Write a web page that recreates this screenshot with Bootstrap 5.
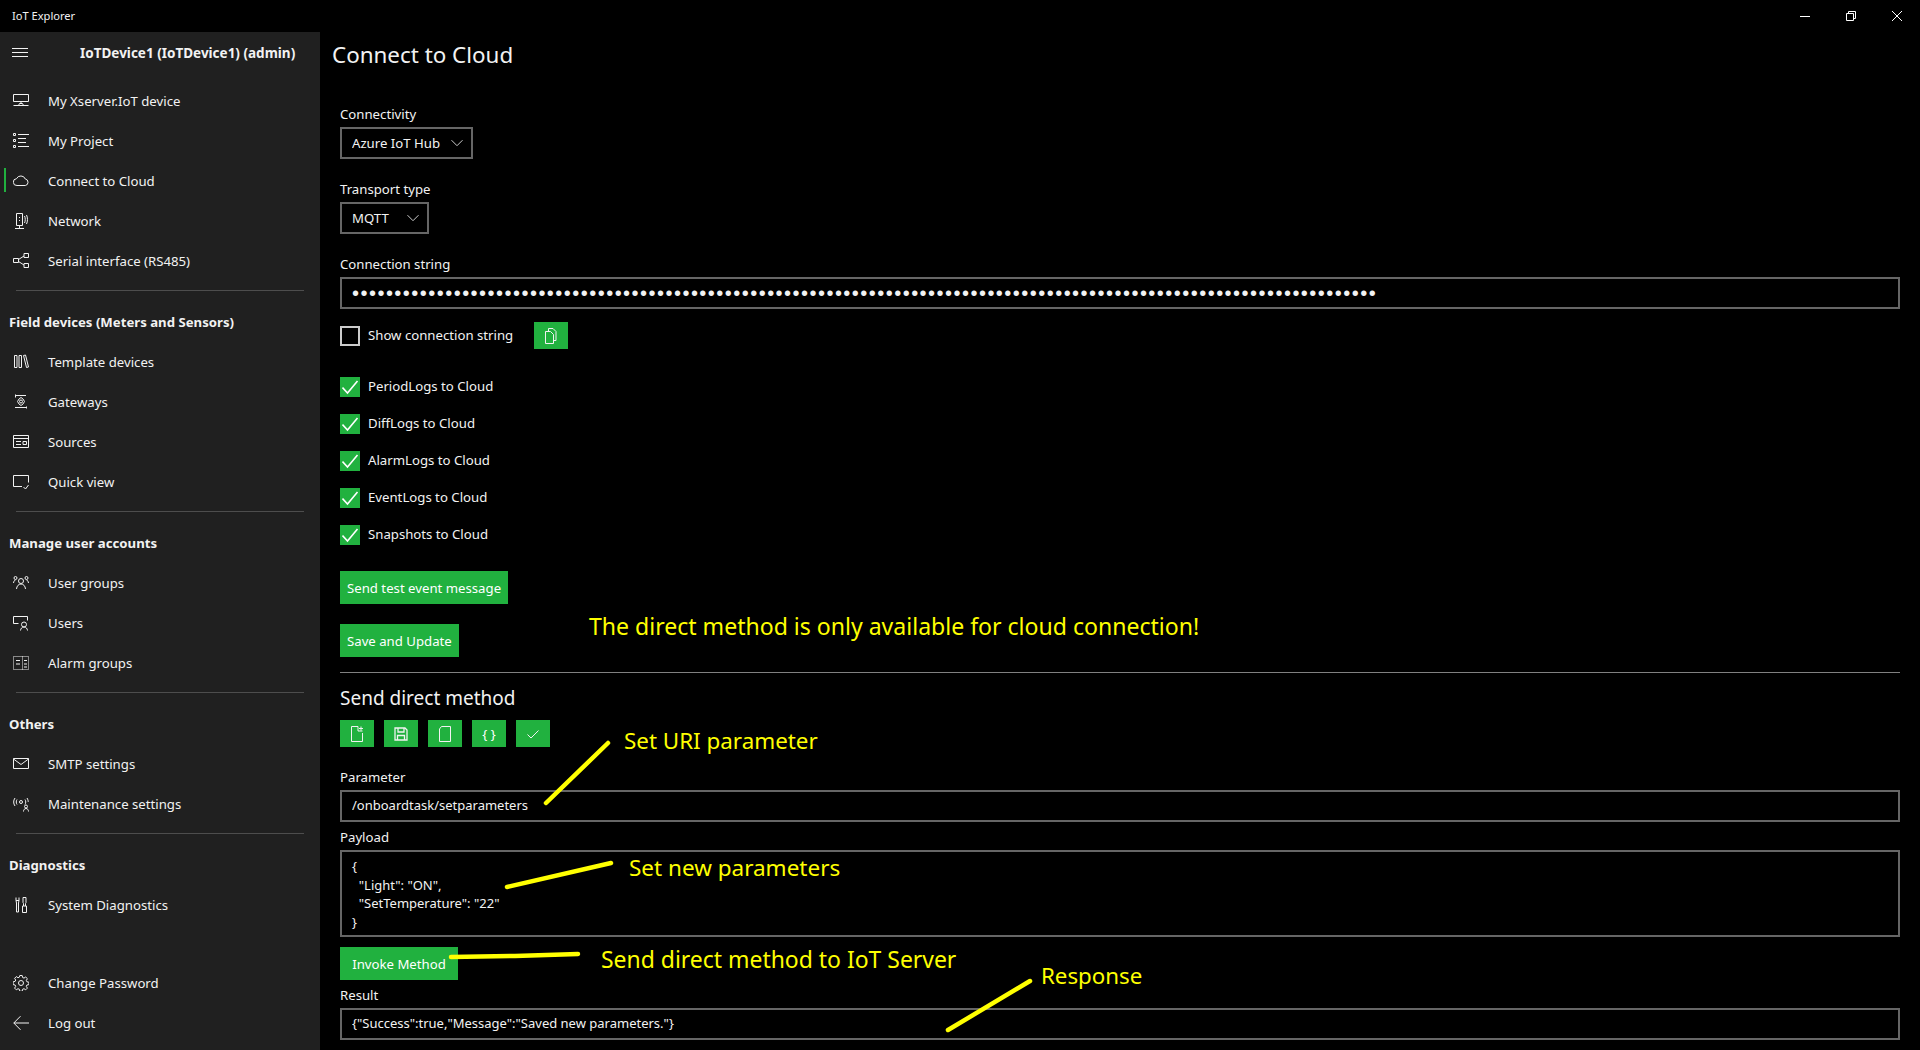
<!DOCTYPE html>
<html lang="en">
<head>
  <meta charset="UTF-8">
  <meta name="viewport" content="width=device-width, initial-scale=1">
  <title>IoT Explorer</title>
  <link href="https://cdn.jsdelivr.net/npm/bootstrap@5.3.2/dist/css/bootstrap.min.css" rel="stylesheet">
  <style>
    html, body { height: 100%; }
    body { background: #000; color: #f2f2f2; font-family: "Noto Sans", "Liberation Sans", sans-serif; font-size: 13.2px; overflow: hidden; position: relative; }
    svg.ico { width: 16px; height: 16px; fill: none; stroke: #f2f2f2; stroke-width: 1; flex: none; }
    .title-bar { height: 32px; font-size: 11.1px; padding-left: 12px; }
    .win-btn { width: 46px; height: 32px; }
    .win-btn svg { width: 12px; height: 12px; fill: none; stroke: #fff; stroke-width: 1; }
    .app-shell { height: 1018px; }
    .side-bar { width: 320px; background: #202020; padding-bottom: 7px; }
    .side-head { height: 42px; margin-bottom: 7px; padding-left: 12px; }
    .side-head b { margin-left: 52px; font-size: 13.5px; font-weight: 700; white-space: nowrap; }
    .side-item { height: 40px; padding-left: 13px; gap: 19px; color: #f2f2f2; position: relative; text-decoration: none; }
    .side-item span { padding-top: 2px; }
    .side-item.active-page::before { content: ""; position: absolute; left: 4px; top: 7px; width: 2px; height: 24px; background: #21b13f; }
    .side-rule { margin: 9px 16px 0; border: 0; border-top: 1px solid #4d4d4d; opacity: 1; }
    .side-title { height: 24px; line-height: 24px; margin: 19px 0 8px 9px; font-size: 13.2px; font-weight: 700; }
    .main-pane { padding: 0 20px; }
    .page-title { margin: 0 0 0 -8px; height: 44px; line-height: 46px; padding: 0; font-size: 22.4px; font-weight: 400; color: #f2f2f2; }
    .fld-label { display: block; height: 20px; line-height: 20px; margin: 0 0 3px; }
    .fld-gap { margin-top: 20px; }
    .fld-gap-sm { margin-top: 5px; }
    .box-field.form-control, .box-field.form-select { height: 32px; min-height: 0; padding: 0 10px 2px; background-color: #000; color: #f2f2f2; border: 2px solid #666; border-radius: 0; font-size: 13px; box-shadow: none; }
    .box-field.form-select { font-size: 13.2px; padding: 2px 24px 0 10px; background-image: url("data:image/svg+xml,%3csvg xmlns='http://www.w3.org/2000/svg' viewBox='0 0 12 12'%3e%3cpath fill='none' stroke='%23ccc' d='M.5 3.200 6 8.700l5.500-5.500'/%3e%3c/svg%3e"); background-position: right 8px center; background-size: 12px 12px; }
    .sel-azure { width: 133px; }
    .sel-mqtt { width: 89px; }
    .area-field.form-control { height: 87px; padding: 5px 10px 0; line-height: 18.5px; resize: none; overflow: hidden; }
    .secret-field.form-control { font-family: "Liberation Sans", sans-serif; letter-spacing: 1.47px; font-size: 20px; padding-bottom: 0; }
    .tick-row { height: 20px; gap: 8px; }
    .tick-row .form-check-input { width: 20px; height: 20px; margin: 0; flex: none; background-color: #000; border: 2px solid #ccc; border-radius: 0; box-shadow: none; }
    .tick-row .form-check-input:checked { background-color: #21b13f; border-color: #21b13f; background-image: url("data:image/svg+xml,%3csvg xmlns='http://www.w3.org/2000/svg' viewBox='0 0 20 20'%3e%3cpath fill='none' stroke='%23fff' stroke-width='1.6' d='M2.500 10.500 7.500 16 17.500 4'/%3e%3c/svg%3e"); background-size: 20px 20px; }
    .tick-row label { line-height: 20px; padding-bottom: 2px; }
    .show-row { margin-top: 13px; height: 27px; }
    .copy-btn { margin-left: 13px; }
    .tick-stack { margin-top: 28px; gap: 17px; }
    .btn.green-btn { background: #21b13f; border: 0; border-radius: 0; color: #fff; font-size: 13.2px; padding: 1px 7px 0; height: 33px; line-height: 32px; white-space: nowrap; }
    .btn.green-btn.invoke-btn { padding: 1px 0 0; margin-top: 10px; width: 118px; text-align: center; }
    .btn.icon-btn { width: 34px; height: 27px; padding: 0; }
    .main-rule { margin: 15px 0 0; border: 0; border-top: 1px solid #808080; opacity: 1; }
    .sub-title { margin: 11px 0 8px; height: 28px; line-height: 28px; font-size: 19px; font-weight: 400; color: #f2f2f2; }
    .note-text { position: absolute; color: #ff0; line-height: 30px; white-space: nowrap; }
    .note-lines { position: absolute; inset: 0; width: 1920px; height: 1050px; pointer-events: none; fill: none; stroke: #ff0; stroke-width: 4.5; stroke-linecap: round; stroke-linejoin: round; }
    .note-1 { left: 589px; top: 611px; font-size: 23.05px; }
    .note-2 { left: 624px; top: 726px; font-size: 22.4px; }
    .note-3 { left: 629px; top: 853px; font-size: 22.5px; }
    .note-4 { left: 601px; top: 944px; font-size: 22.95px; }
    .note-5 { left: 1041px; top: 961px; font-size: 22.3px; }
  </style>
</head>
<body>
  <div class="title-bar d-flex align-items-center justify-content-between">
    <span>IoT Explorer</span>
    <div class="d-flex">
      <div class="win-btn d-flex align-items-center justify-content-center"><svg viewBox="0 0 12 12"><path d="M1 6.500h10"/></svg></div>
      <div class="win-btn d-flex align-items-center justify-content-center"><svg viewBox="0 0 12 12"><path d="M1.500 3.500h7v7h-7zM3.500 3.500v-2h7v7h-2"/></svg></div>
      <div class="win-btn d-flex align-items-center justify-content-center"><svg viewBox="0 0 12 12"><path d="M1 1l10 10M11 1 1 11"/></svg></div>
    </div>
  </div>

  <div class="app-shell d-flex">
    <nav class="side-bar d-flex flex-column flex-shrink-0">
      <div class="side-head d-flex align-items-center">
        <svg class="ico" viewBox="0 0 16 16"><path d="M0 3.500h16M0 7.500h16M0 11.500h16"/></svg>
        <b>IoTDevice1 (IoTDevice1) (admin)</b>
      </div>

      <a class="side-item d-flex align-items-center" href="#">
        <svg class="ico" viewBox="0 0 16 16"><path d="M.5 1.500h15v7H.5zM8 8.500v2M5.500 12.500l1-2h3l1 2M.5 12.500h15"/></svg>
        <span>My Xserver.IoT device</span>
      </a>
      <a class="side-item d-flex align-items-center" href="#">
        <svg class="ico" viewBox="0 0 16 16"><path d="M.5.5h2v2h-2zM.5 6.500h2v2h-2zM.5 12.500h2v2h-2zM5 1.500h11M5 5.500h8M5 9.500h8M5 13.500h11"/></svg>
        <span>My Project</span>
      </a>
      <a class="side-item active-page d-flex align-items-center" href="#">
        <svg class="ico" viewBox="0 0 16 16"><path d="M4 12.500a3.400 3.400 0 0 1-.5-6.800A4.800 4.800 0 0 1 12.300 6a3.300 3.300 0 0 1 0 6.500z"/></svg>
        <span>Connect to Cloud</span>
      </a>
      <a class="side-item d-flex align-items-center" href="#">
        <svg class="ico" viewBox="0 0 16 16"><path d="M3.500.5h6v12h-6zM6.500 12.500v2.500M2 15.500h9M6.500 4v1M6.500 7v1M11.500 3c1 2 1 5 0 7M13.500 2c1.300 2.500 1.300 6.500 0 9"/></svg>
        <span>Network</span>
      </a>
      <a class="side-item d-flex align-items-center" href="#">
        <svg class="ico" viewBox="0 0 16 16"><path d="M.5 5.500h5v4h-5zM11 .5h4.500v4H11zM11 10.500h4.500v4H11zM5.500 6.500 11 3M5.500 8.500 11 12"/></svg>
        <span>Serial interface (RS485)</span>
      </a>

      <hr class="side-rule">
      <div class="side-title">Field devices (Meters and Sensors)</div>

      <a class="side-item d-flex align-items-center" href="#">
        <svg class="ico" viewBox="0 0 16 16"><path d="M1.500 1.500h2.500v12H1.500zM6 1.500h2.500v12H6zM10.500 1.500l2-.5 3 12-2 .5z"/></svg>
        <span>Template devices</span>
      </a>
      <a class="side-item d-flex align-items-center" href="#">
        <svg class="ico" viewBox="0 0 16 16"><path d="M2 1.500h11M2.500.5v3M2 13.500h12M13.500 12.500v2M6 5l2-1.500L10 5l1.500 2.500L10 10l-2 1.500L6 10 4.500 7.500z"/><circle cx="8" cy="7.500" r="1.500"/></svg>
        <span>Gateways</span>
      </a>
      <a class="side-item d-flex align-items-center" href="#">
        <svg class="ico" viewBox="0 0 16 16"><path d="M.5 1.500h15v12H.5zM.5 4.500h15M3 7.500h5M3 10.500h5M10 7.500h3.500v3H10z"/></svg>
        <span>Sources</span>
      </a>
      <a class="side-item d-flex align-items-center" href="#">
        <svg class="ico" viewBox="0 0 16 16"><path d="M9 12.500H.5v-11h15v7M7 12v1M10.500 13l2 2 3-4"/></svg>
        <span>Quick view</span>
      </a>

      <hr class="side-rule">
      <div class="side-title">Manage user accounts</div>

      <a class="side-item d-flex align-items-center" href="#">
        <svg class="ico" viewBox="0 0 16 16"><circle cx="8" cy="6" r="2.500"/><circle cx="2.500" cy="3" r="1.500"/><circle cx="13.500" cy="3" r="1.500"/><path d="M3.500 14c.3-3 2-5 4.500-5s4.200 2 4.500 5M.5 8c.2-1.500 1-3 2-3M15.500 8c-.2-1.500-1-3-2-3"/></svg>
        <span>User groups</span>
      </a>
      <a class="side-item d-flex align-items-center" href="#">
        <svg class="ico" viewBox="0 0 16 16"><path d="M.5 8.500v-7h14v4M.5 8.500h5"/><circle cx="11" cy="9.500" r="2.500"/><path d="M7.500 15.500c.2-2 1.500-3.500 3.500-3.500s3.300 1.500 3.500 3.500"/></svg>
        <span>Users</span>
      </a>
      <a class="side-item d-flex align-items-center" href="#">
        <svg class="ico" viewBox="0 0 16 16"><path stroke-dasharray="1 1" d="M.5 1.500h15v13H.5zM9.500 1.500v13"/><path d="M3 5.500h4M3 9h4M11 5.500h3M11 9h3M11 12h3"/></svg>
        <span>Alarm groups</span>
      </a>

      <hr class="side-rule">
      <div class="side-title">Others</div>

      <a class="side-item d-flex align-items-center" href="#">
        <svg class="ico" viewBox="0 0 16 16"><path d="M.5 2.500h15v10H.5zM.5 3 8 8.500 15.500 3"/></svg>
        <span>SMTP settings</span>
      </a>
      <a class="side-item d-flex align-items-center" href="#">
        <svg class="ico" viewBox="0 0 16 16"><path d="M2 2C.2 4.500.2 7.500 2 10M4 3.500c-1 1.500-1 3.500 0 5M12 3.500c1 1.500 1 3.500 0 5M14 2c1 1.500 1.300 3 1.200 4"/><circle cx="8" cy="6" r="1.500"/><circle cx="13" cy="10.500" r="1.500"/><path d="M10.500 15.500c0-1.700 1-3 2.500-3s2.500 1.300 2.500 3"/></svg>
        <span>Maintenance settings</span>
      </a>

      <hr class="side-rule">
      <div class="side-title">Diagnostics</div>

      <a class="side-item d-flex align-items-center" href="#">
        <svg class="ico" viewBox="0 0 16 16"><path d="M3 .5v3h3v-3M3 3.500 3.500 6v9h2V6L6 3.500M10 .5h3v5l-.5 1v2.500M10 .5v5l.5 1V9M9.500 9h4v6.500h-4z"/></svg>
        <span>System Diagnostics</span>
      </a>

      <a class="side-item d-flex align-items-center mt-auto" href="#">
        <svg class="ico" viewBox="0 0 16 16"><circle cx="8" cy="8" r="2.500"/><path d="M6.800.5h2.400l.4 2 1.400.6 1.700-1.100 1.700 1.700-1.100 1.700.6 1.400 2 .4v2.400l-2 .4-.6 1.400 1.100 1.700-1.700 1.700-1.700-1.100-1.400.6-.4 2H6.800l-.4-2-1.400-.6-1.700 1.100-1.700-1.700 1.100-1.700-.6-1.400-2-.4V6.800l2-.4.6-1.400-1.100-1.700 1.700-1.700 1.700 1.100 1.400-.6z"/></svg>
        <span>Change Password</span>
      </a>
      <a class="side-item d-flex align-items-center" href="#">
        <svg class="ico" viewBox="0 0 16 16"><path d="M16 8H.8M7.500 1.200.8 8l6.700 6.800"/></svg>
        <span>Log out</span>
      </a>
    </nav>

    <main class="main-pane flex-grow-1">
      <h1 class="page-title">Connect to Cloud</h1>

      <label class="fld-label" style="margin-top:28px">Connectivity</label>
      <select class="form-select box-field sel-azure"><option>Azure IoT Hub</option></select>

      <label class="fld-label fld-gap">Transport type</label>
      <select class="form-select box-field sel-mqtt"><option>MQTT</option></select>

      <label class="fld-label fld-gap">Connection string</label>
      <input id="connString" type="password" class="form-control box-field secret-field">

      <div class="show-row tick-row d-flex align-items-center">
        <input class="form-check-input" type="checkbox" id="showConn">
        <label for="showConn">Show connection string</label>
        <button class="btn green-btn icon-btn copy-btn d-flex align-items-center justify-content-center" type="button">
          <svg class="ico" viewBox="0 0 16 16"><path d="M5.500 3.500V.5H10l3 3v9h-2.500M2.500 3.500h5l3 3v9h-8z"/></svg>
        </button>
      </div>

      <div class="tick-stack d-flex flex-column">
        <div class="tick-row d-flex align-items-center"><input class="form-check-input" type="checkbox" checked id="logPeriod"><label for="logPeriod">PeriodLogs to Cloud</label></div>
        <div class="tick-row d-flex align-items-center"><input class="form-check-input" type="checkbox" checked id="logDiff"><label for="logDiff">DiffLogs to Cloud</label></div>
        <div class="tick-row d-flex align-items-center"><input class="form-check-input" type="checkbox" checked id="logAlarm"><label for="logAlarm">AlarmLogs to Cloud</label></div>
        <div class="tick-row d-flex align-items-center"><input class="form-check-input" type="checkbox" checked id="logEvent"><label for="logEvent">EventLogs to Cloud</label></div>
        <div class="tick-row d-flex align-items-center"><input class="form-check-input" type="checkbox" checked id="logSnap"><label for="logSnap">Snapshots to Cloud</label></div>
      </div>

      <div class="d-flex flex-column align-items-start">
        <button class="btn green-btn" type="button" style="margin-top:26px">Send test event message</button>
        <button class="btn green-btn" type="button" style="margin-top:20px">Save and Update</button>
      </div>

      <hr class="main-rule">
      <h2 class="sub-title">Send direct method</h2>

      <div class="d-flex" style="gap:10px">
        <button class="btn green-btn icon-btn d-flex align-items-center justify-content-center" type="button"><svg class="ico" viewBox="0 0 16 16"><path d="M9 .5H2.500v15h11V7M9 .5V5h4.500M12 .5v4M10 2.500h4"/></svg></button>
        <button class="btn green-btn icon-btn d-flex align-items-center justify-content-center" type="button"><svg class="ico" viewBox="0 0 16 16" style="stroke-width:1.300"><path d="M2 2h10l2 2v10H2zM5 2v4h6V2M4.500 14V9.500h7V14"/></svg></button>
        <button class="btn green-btn icon-btn d-flex align-items-center justify-content-center" type="button"><svg class="ico" viewBox="0 0 16 16"><path d="M4.500 .5h9v15h-11V3z"/></svg></button>
        <button class="btn green-btn icon-btn d-flex align-items-center justify-content-center" type="button">{ }</button>
        <button class="btn green-btn icon-btn d-flex align-items-center justify-content-center" type="button"><svg class="ico" viewBox="0 0 16 16"><path d="M2.500 8.500l3.500 3.500L13.500 4.500"/></svg></button>
      </div>

      <label class="fld-label fld-gap">Parameter</label>
      <input type="text" class="form-control box-field" value="/onboardtask/setparameters">

      <label class="fld-label fld-gap-sm">Payload</label>
      <textarea class="form-control box-field area-field">{
  "Light": "ON",
  "SetTemperature": "22"
}</textarea>

      <button class="btn green-btn invoke-btn d-block" type="button">Invoke Method</button>

      <label class="fld-label fld-gap-sm">Result</label>
      <input type="text" class="form-control box-field" value='{"Success":true,"Message":"Saved new parameters."}'>
    </main>
  </div>

  <!-- hand drawn notes on top of the screenshot -->
  <svg class="note-lines" viewBox="0 0 1920 1050">
    <path d="M608 743 546 803"/>
    <path d="M611 863 507 887"/>
    <path d="M451 957 515 956 578 954"/>
    <path d="M1030 981 948 1030"/>
  </svg>
  <div class="note-text note-1">The direct method is only available for cloud connection!</div>
  <div class="note-text note-2">Set URI parameter</div>
  <div class="note-text note-3">Set new parameters</div>
  <div class="note-text note-4">Send direct method to IoT Server</div>
  <div class="note-text note-5">Response</div>

  <script src="https://cdn.jsdelivr.net/npm/bootstrap@5.3.2/dist/js/bootstrap.bundle.min.js"></script>
  <script>
    document.getElementById("connString").value = "x".repeat(121);
  </script>
</body>
</html>
